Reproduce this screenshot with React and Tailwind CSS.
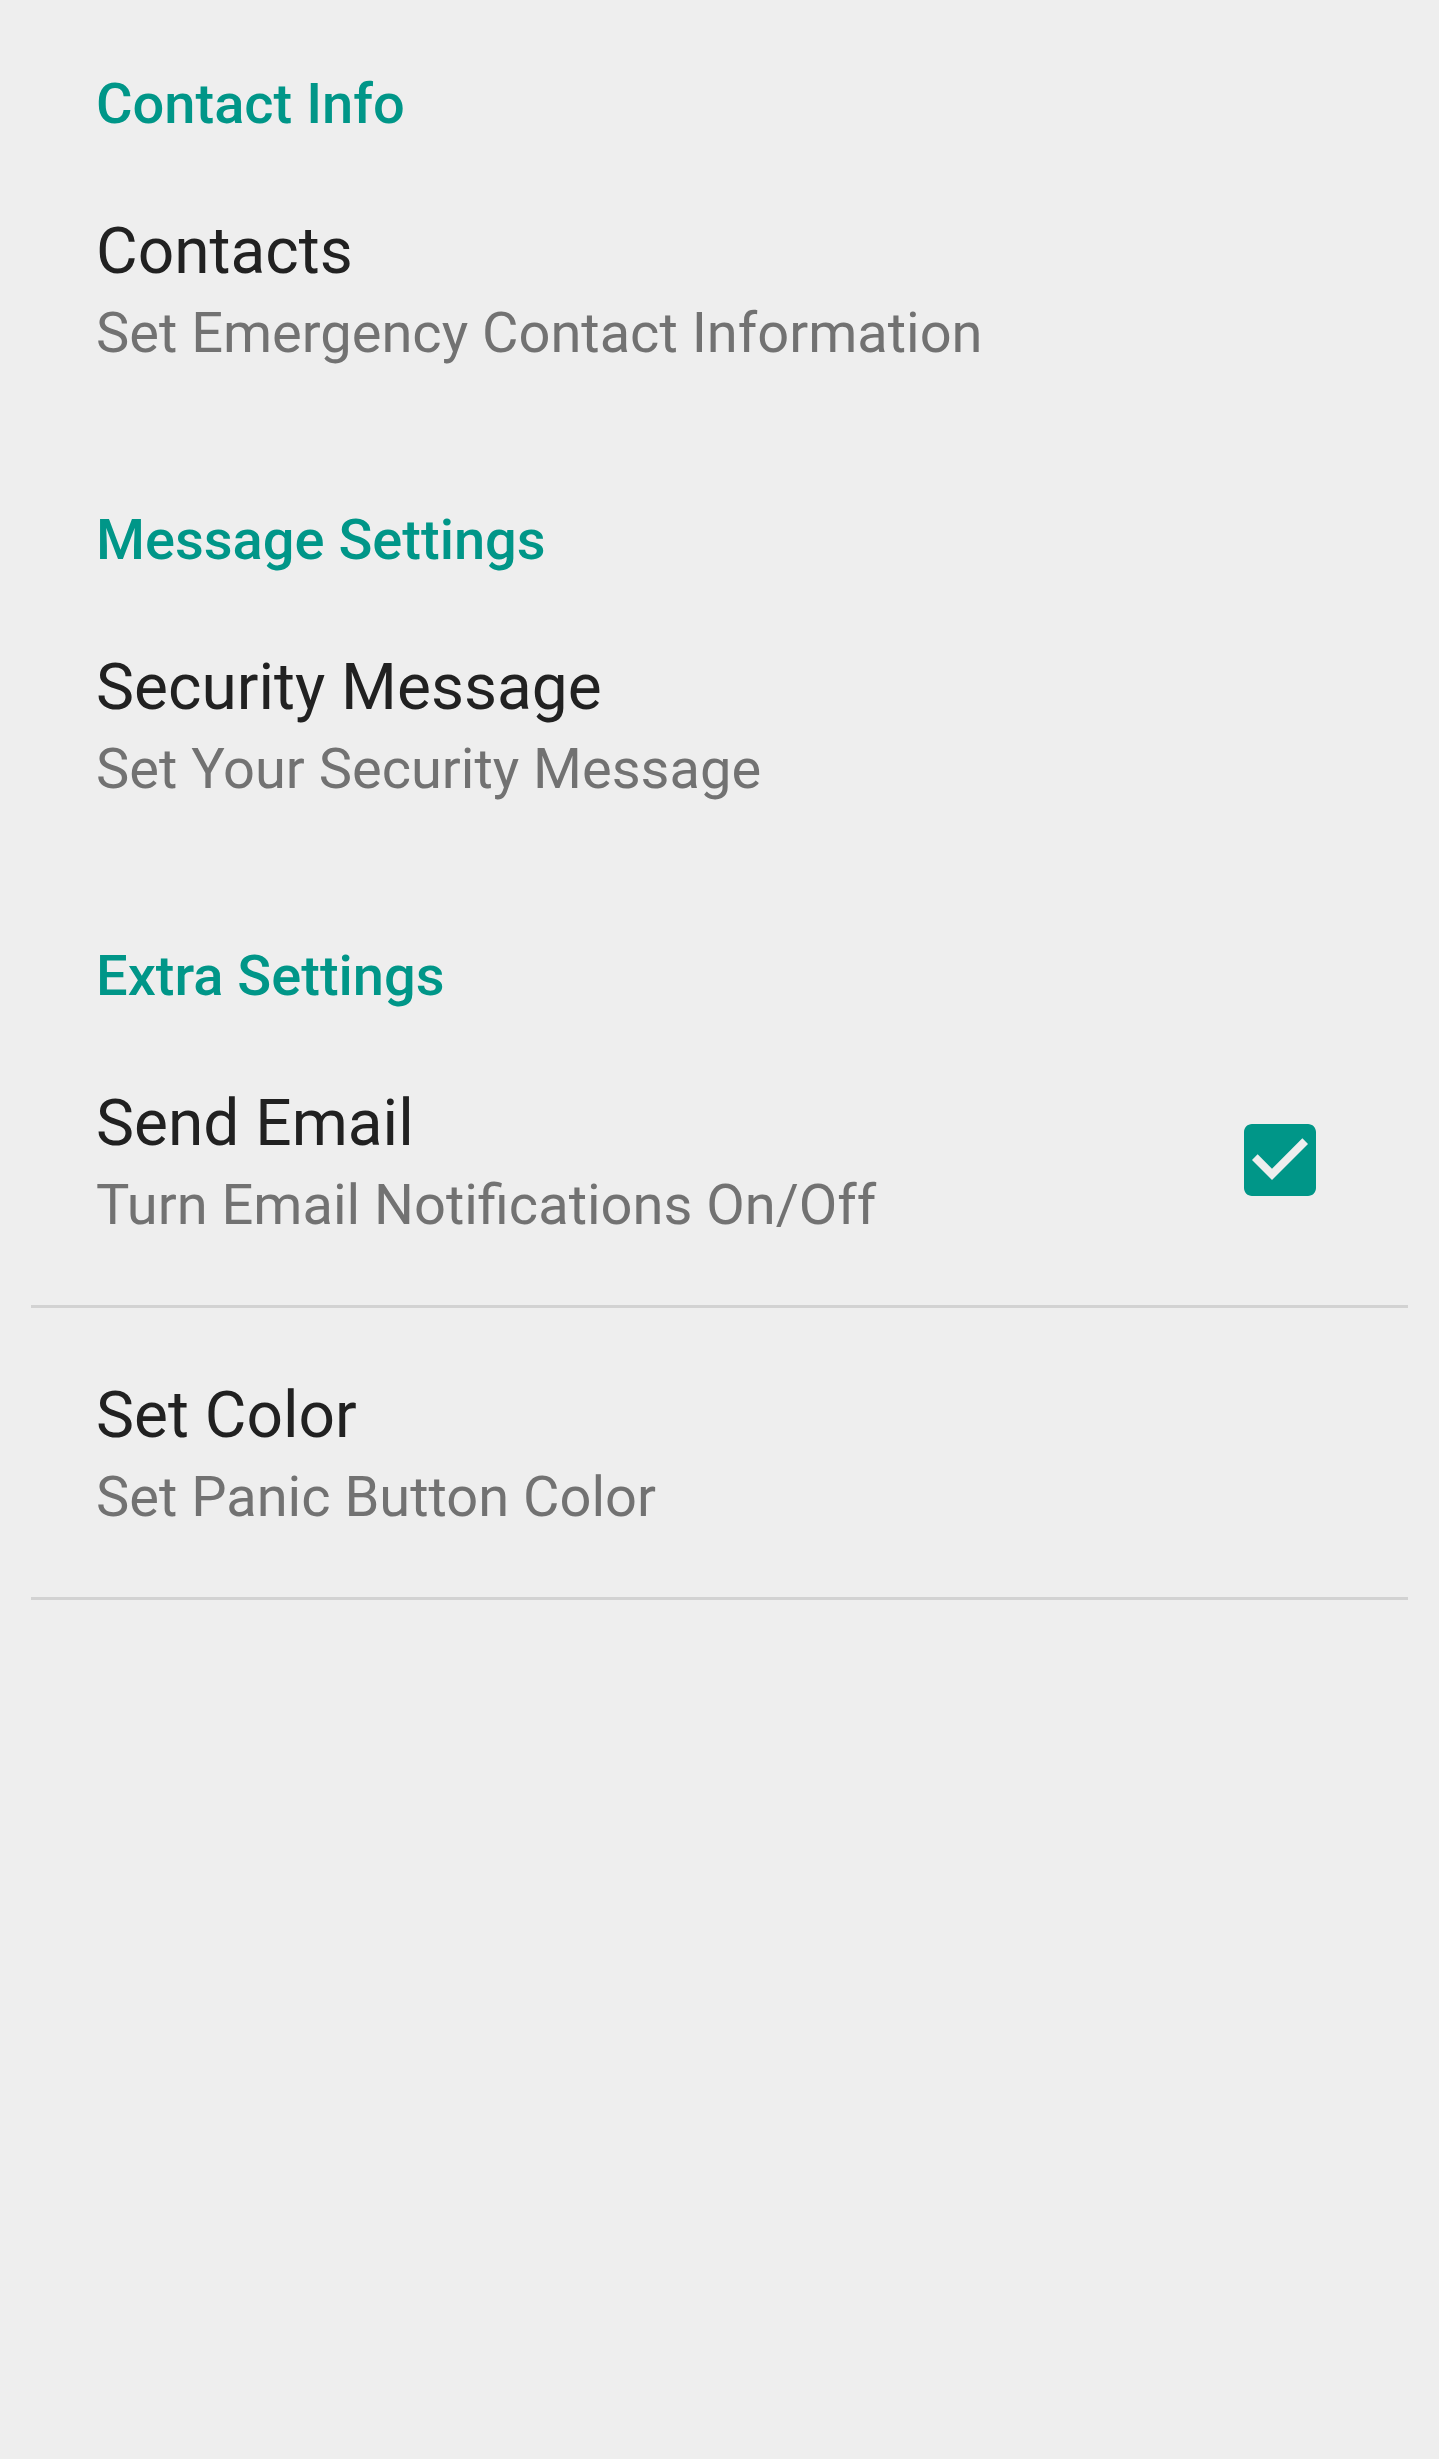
import React, { useState } from "react";

const sections = [
  {
    title: "Contact Info",
    items: [{ title: "Contacts", summary: "Set Emergency Contact Information" }],
  },
  {
    title: "Message Settings",
    items: [{ title: "Security Message", summary: "Set Your Security Message" }],
  },
  {
    title: "Extra Settings",
    items: [
      { title: "Send Email", summary: "Turn Email Notifications On/Off", checkbox: true, divider: true },
      { title: "Set Color", summary: "Set Panic Button Color", divider: true },
    ],
  },
];

function CheckBox({ checked, onChange }) {
  return (
    <button onClick={onChange} className="w-[72px] h-[72px] shrink-0 mb-[9px]">
      <svg viewBox="3 3 18 18" className="w-[72px] h-[72px]">
        {checked ? (
          <path
            fill="#009688"
            d="M19 3H5c-1.11 0-2 .9-2 2v14c0 1.1.89 2 2 2h14c1.11 0 2-.9 2-2V5c0-1.1-.89-2-2-2zm-9 14l-5-5 1.41-1.41L10 14.17l7.59-7.59L19 8l-9 9z"
          />
        ) : (
          <path
            fill="#757575"
            d="M19 5v14H5V5h14m0-2H5c-1.1 0-2 .9-2 2v14c0 1.1.9 2 2 2h14c1.1 0 2-.9 2-2V5c0-1.1-.9-2-2-2z"
          />
        )}
      </svg>
    </button>
  );
}

function PrefItem({ item }) {
  const [checked, setChecked] = useState(true);
  return (
    <>
      <div className="flex items-center pl-[65px] pr-[92px] pt-[68px] pb-[60px]">
        <div className="flex-1 min-w-0">
          <div className="text-[64px] leading-[80px] text-[#212121]">{item.title}</div>
          <div className="mt-px text-[56px] leading-[80px] text-[#727272]">{item.summary}</div>
        </div>
        {item.checkbox && <CheckBox checked={checked} onChange={() => setChecked(!checked)} />}
      </div>
      {item.divider && <div className="h-[3px] bg-[#d2d2d2]" />}
    </>
  );
}

export default function App() {
  return (
    <div
      className="min-h-screen bg-[#eeeeee] px-[31px]"
      style={{ fontFamily: "Roboto, 'Noto Sans', sans-serif" }}
    >
      {sections.map((section, i) => (
        <div key={section.title}>
          <div
            className={
              (i === 0 ? "pt-[64px] " : "pt-[67px] ") +
              "pl-[65px] text-[56px] leading-[80px] font-medium text-[#009688]"
            }
          >
            {section.title}
          </div>
          {section.items.map((item) => (
            <PrefItem key={item.title} item={item} />
          ))}
        </div>
      ))}
    </div>
  );
}
